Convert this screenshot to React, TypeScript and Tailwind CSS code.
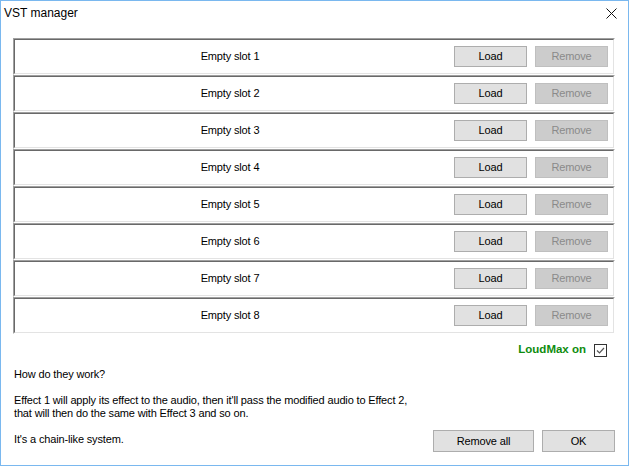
import React from "react";

const font = { fontFamily: '"Liberation Sans", Arial, sans-serif' };

function Slot({ n }: { n: number }) {
  return (
    <div className="h-[37px] border-t border-l border-t-[#a0a0a0] border-l-[#a0a0a0] border-b border-r border-b-white border-r-white">
      <div className="h-full flex items-center border-t border-l border-t-[#696969] border-l-[#696969] border-b border-r border-b-[#e3e3e3] border-r-[#e3e3e3]">
        <div className="flex-1 text-center text-[11px] tracking-[-0.15px] text-black">Empty slot {n}</div>
        <div className="flex items-center gap-2 pl-[9px] pr-[5px]">
          <div className="w-[73px] h-[21px] flex items-center justify-center bg-[#e1e1e1] border border-[#adadad] text-[11px] tracking-[-0.15px] text-black">
            Load
          </div>
          <div className="w-[73px] h-[21px] flex items-center justify-center bg-[#cccccc] border border-[#bfbfbf] text-[11px] tracking-[-0.15px] text-[#8a8a8a]">
            Remove
          </div>
        </div>
      </div>
    </div>
  );
}

export default function App() {
  return (
    <div
      style={font}
      className="w-[629px] h-[466px] border border-[#7ab8ef] bg-white flex flex-col overflow-hidden"
    >
      <div className="h-[24px] flex items-center justify-between pl-[3px] pr-[11px]">
        <span className="text-[12px] text-black">VST manager</span>
        <svg width="11" height="11" viewBox="0 0 11 11">
          <path d="M0.5 0.5 L10.5 10.5 M10.5 0.5 L0.5 10.5" stroke="#111" strokeWidth="1" fill="none" />
        </svg>
      </div>
      <div className="mt-[13px] ml-[12px] w-[602px] flex flex-col">
        {[1, 2, 3, 4, 5, 6, 7, 8].map((n) => (
          <Slot key={n} n={n} />
        ))}
      </div>
      <div className="mt-[8px] h-[16px] flex items-center justify-end gap-2 pr-[21px]">
        <span className="text-[11.5px] font-bold text-[#0e8c0e]">LoudMax on</span>
        <div className="w-[13px] h-[13px] border border-[#333333] bg-white flex items-center justify-center">
          <svg width="11" height="11" viewBox="0 0 11 11">
            <path d="M2 5.5 L4.5 8 L9 3" stroke="#555" strokeWidth="1.2" fill="none" />
          </svg>
        </div>
      </div>
      <div className="mt-[10px] flex items-start justify-between pl-[13px] pr-[13px]">
        <div className="text-[11px] tracking-[-0.15px] leading-[13px] text-black whitespace-pre-line">
          {"How do they work?\n\nEffect 1 will apply its effect to the audio, then it'll pass the modified audio to Effect 2,\nthat will then do the same with Effect 3 and so on.\n\nIt's a chain-like system."}
        </div>
        <div className="mt-[62px] flex gap-2">
          <div className="w-[101px] h-[22px] flex items-center justify-center bg-[#e1e1e1] border border-[#adadad] text-[11px] tracking-[-0.15px] text-black">
            Remove all
          </div>
          <div className="w-[73px] h-[22px] flex items-center justify-center bg-[#e1e1e1] border border-[#adadad] text-[11px] tracking-[-0.15px] text-black">
            OK
          </div>
        </div>
      </div>
    </div>
  );
}
